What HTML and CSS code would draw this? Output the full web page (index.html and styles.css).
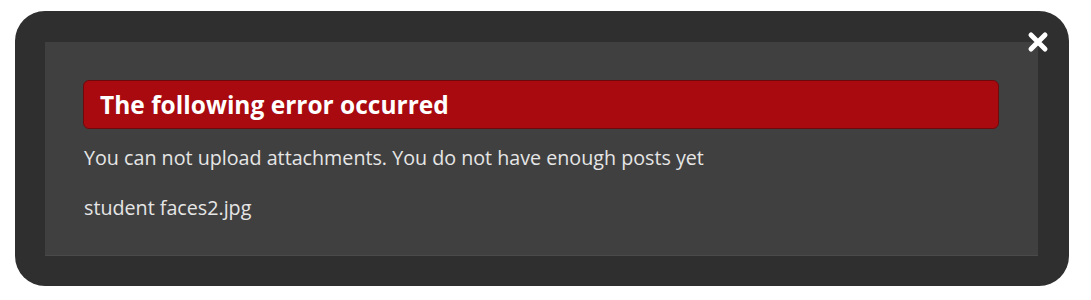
FILE: index.html
```html
<!DOCTYPE html>
<html>
<head>
<meta charset="utf-8">
<link rel="stylesheet" href="styles.css">
</head>
<body>
<div class="modal">
  <div class="panel">
    <div class="error-head">The following error occurred</div>
    <p class="msg">You can not upload attachments. You do not have enough posts yet</p>
    <p class="msg">student faces2.jpg</p>
  </div>
  <button class="close" aria-label="Close">
    <svg width="22" height="22" viewBox="0 0 22 22"><path d="M4 4 L18 18 M18 4 L4 18" stroke="#fff" stroke-width="5" stroke-linecap="round"/></svg>
  </button>
</div>
</body>
</html>
```
FILE: styles.css
```css
html, body {
  margin: 0;
  padding: 0;
  background: #ffffff;
}
body {
  font-family: "Open Sans", "Noto Sans", sans-serif;
}
.modal {
  position: relative;
  margin: 11px 0 0 15px;
  width: 1054px;
  height: 275px;
  box-sizing: border-box;
  padding: 31px 31px 30px 30px;
  background: #2f2f2f;
  border-radius: 30px;
}
.panel {
  height: 214px;
  box-sizing: border-box;
  background: #404040;
  padding: 38px 38px 0 38px;
  box-shadow: inset 0 -1px 0 #4a4a4a;
}
.error-head {
  width: 916px;
  height: 49px;
  box-sizing: border-box;
  background: #a80a10;
  border: 1px solid #6e0a0c;
  border-radius: 6px;
  color: #ffffff;
  font-weight: 700;
  font-size: 24.5px;
  line-height: 47px;
  padding-left: 16px;
}
.msg {
  margin: 0;
  color: #e6e6e6;
  font-size: 19.7px;
  line-height: 50px;
  padding-left: 1px;
}
.msg:first-of-type {
  margin-top: 4px;
}
.close {
  position: absolute;
  top: 20px;
  right: 20px;
  width: 22px;
  height: 22px;
  padding: 0;
  border: 0;
  background: none;
  display: flex;
}
```
